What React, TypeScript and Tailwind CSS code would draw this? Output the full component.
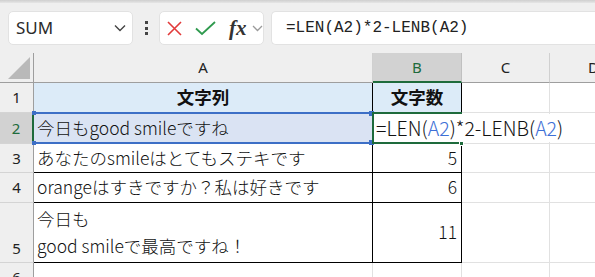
import React from "react";

const jp = "font-['Noto_Sans_CJK_JP','Noto_Sans',sans-serif]";
const ui = "font-['Noto_Sans','Noto_Sans_CJK_JP',sans-serif]";

const rowHead = `${ui} flex items-center justify-center bg-[#efefef] border-r border-b border-r-[#9e9e9e] border-b-[#d4d4d4] text-[15px] text-[#222]`;
const colHead = `${ui} flex items-center justify-center bg-[#efefef] border-r border-b border-r-[#d0d0d0] border-b-[#9e9e9e] text-[15px] text-[#222]`;
const blank = "bg-white border-r border-b border-[#e1e1e1]";
const boxed = `${jp} flex items-center border-r border-b border-black text-[17.5px] font-light text-[#111]`;

function Toolbar() {
  return (
    <div className="bg-[#efefef]">
      <div className="h-[3px] bg-gradient-to-b from-[#cfcfcf] to-[#e6e6e6]" />
      <div className="flex items-center h-[50px] pb-[8px] pt-[8px] pl-[8px] gap-[7px]">
        <div className="flex items-center justify-between w-[125px] h-[34px] bg-white rounded-[5px] border border-[#e2e2e2] pl-[7px] pr-[6px]">
          <span className={`${ui} text-[17px] text-[#2b2b2b]`}>SUM</span>
          <svg width="12" height="8" viewBox="0 0 12 8">
            <path d="M1 1.5 L6 6.5 L11 1.5" fill="none" stroke="#444" strokeWidth="1.4" />
          </svg>
        </div>
        <div className="flex flex-col gap-[2.5px] w-[12px] items-center">
          <span className="w-[3px] h-[3px] bg-[#444]" />
          <span className="w-[3px] h-[3px] bg-[#444]" />
          <span className="w-[3px] h-[3px] bg-[#444]" />
        </div>
        <div className="flex items-center w-[105px] h-[34px] bg-white rounded-[5px] border border-[#e2e2e2] pl-[7px]">
          <svg width="15" height="15" viewBox="0 0 15 15">
            <path d="M1 1 L14 14 M14 1 L1 14" stroke="#e23a3a" strokeWidth="1.6" />
          </svg>
          <svg className="ml-[13px]" width="21" height="15" viewBox="0 0 21 15">
            <path d="M1 7.5 L7 13 L20 1" fill="none" stroke="#2f9a4e" strokeWidth="1.8" />
          </svg>
          <span className="ml-[13px] font-['Liberation_Serif',serif] italic font-bold text-[21px] leading-none text-[#333]">fx</span>
          <svg className="ml-[5px]" width="11" height="7" viewBox="0 0 11 7">
            <path d="M1 1 L5.5 5.5 L10 1" fill="none" stroke="#9a9a9a" strokeWidth="1.3" />
          </svg>
        </div>
        <div className="flex-1 flex items-center h-[34px] bg-white rounded-l-[5px] border border-r-0 border-[#e2e2e2] pl-[14px]">
          <span className="font-['Liberation_Mono',monospace] text-[16px] text-[#222]">=LEN(A2)*2-LENB(A2)</span>
        </div>
      </div>
    </div>
  );
}

function Sheet() {
  return (
    <div className="grid grid-cols-[34px_339px_89px_88px_88px] grid-rows-[30px_30px_31px_29px_30px_60px_30px]">
      {/* header */}
      <div className="relative bg-[#efefef] border-r border-b border-[#9e9e9e] flex items-end justify-end p-[3px]">
        <svg width="22" height="22" viewBox="0 0 22 22">
          <path d="M22 0 L22 22 L0 22 Z" fill="#b9b9b9" />
        </svg>
      </div>
      <div className={colHead}>A</div>
      <div className={`${ui} flex items-center justify-center bg-[#d2d2d2] border-r border-r-[#c0c0c0] border-b-2 border-b-[#1e6b3c] text-[15px] text-[#1e6b3c]`}>B</div>
      <div className={colHead}>C</div>
      <div className={colHead}>D</div>

      {/* row 1 */}
      <div className={rowHead}>1</div>
      <div className={`${boxed} justify-center bg-[#dcebf8] !font-bold`}>文字列</div>
      <div className={`${boxed} justify-center bg-[#dcebf8] !font-bold`}>文字数</div>
      <div className={blank} />
      <div className={blank} />

      {/* row 2 */}
      <div className={`${ui} flex items-center justify-center bg-[#d2d2d2] border-b border-b-[#d4d4d4] border-r-2 border-r-[#1e6b3c] text-[15px] text-[#1e6b3c]`}>2</div>
      <div className={`${boxed} relative bg-[#dae3f3] pl-[3px]`}>
        今日もgood smileですね
        <div className="absolute z-10 -top-[1px] -left-px right-0 h-[2px] bg-[#3d6fc6]" />
        <div className="absolute z-10 -bottom-[1px] -left-px right-0 h-[2px] bg-[#3d6fc6]" />
        <div className="absolute z-10 -top-[2px] -left-[2px] w-[4px] h-[4px] bg-[#3d6fc6]" />
        <div className="absolute z-10 -bottom-[2px] -left-[2px] w-[4px] h-[4px] bg-[#3d6fc6]" />
        <div className="absolute z-10 -top-[2px] -right-[2px] w-[5px] h-[5px] bg-[#3d6fc6]" />
        <div className="absolute z-10 -bottom-[2px] -right-[2px] w-[5px] h-[5px] bg-[#3d6fc6]" />
      </div>
      <div className={`${boxed} relative bg-white`}>
        <div className="absolute z-20 -top-px -left-px -right-px -bottom-px border-t-2 border-l-2 border-b-2 border-[#1e6b3c]" />
        <div className={`${jp} absolute z-20 top-[1px] bottom-[1px] left-[1px] bg-white flex items-center pl-[2px] pr-[6px] whitespace-nowrap text-[19.5px] font-light text-[#111]`}>
          =LEN(<span className="text-[#3d6fd6]">A2</span>)*2-LENB(<span className="text-[#3d6fd6]">A2</span>)
        </div>
        <div className="absolute z-30 -bottom-[3px] -right-[3px] w-[5px] h-[5px] bg-[#1e6b3c] border border-white" />
      </div>
      <div className={blank} />
      <div className={blank} />

      {/* row 3 */}
      <div className={rowHead}>3</div>
      <div className={`${boxed} pl-[3px]`}>あなたのsmileはとてもステキです</div>
      <div className={`${boxed} justify-end pr-[4px]`}>5</div>
      <div className={blank} />
      <div className={blank} />

      {/* row 4 */}
      <div className={rowHead}>4</div>
      <div className={`${boxed} pl-[3px]`}>orangeはすきですか？私は好きです</div>
      <div className={`${boxed} justify-end pr-[4px]`}>6</div>
      <div className={blank} />
      <div className={blank} />

      {/* row 5 */}
      <div className={`${rowHead} items-end pb-[3px]`}>5</div>
      <div className={`${boxed} items-end pl-[3px] pb-[3px] leading-[27px]`}>
        <div>
          今日も
          <br />
          good smileで最高ですね！
        </div>
      </div>
      <div className={`${boxed} justify-end pr-[4px]`}>11</div>
      <div className={blank} />
      <div className={blank} />

      {/* row 6 */}
      <div className={rowHead}>6</div>
      <div className={blank} />
      <div className={blank} />
      <div className={blank} />
      <div className={blank} />
    </div>
  );
}

export default function App() {
  return (
    <div className="w-[595px] h-[277px] overflow-hidden bg-white">
      <Toolbar />
      <Sheet />
    </div>
  );
}
